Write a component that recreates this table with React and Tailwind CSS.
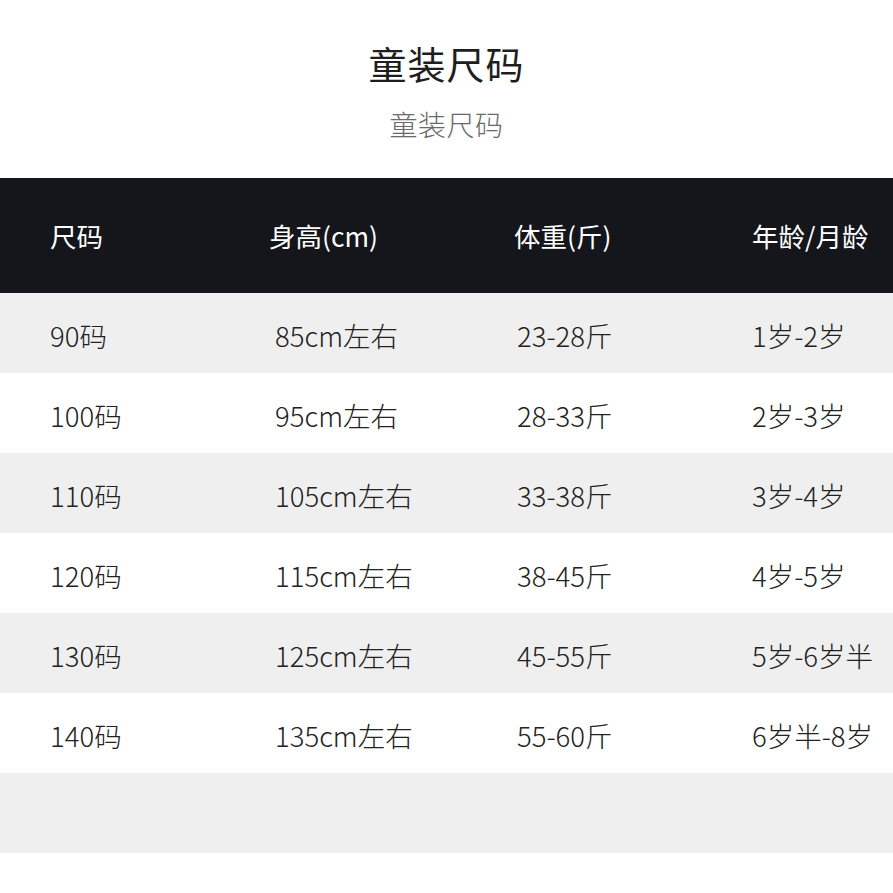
const rows = [
  ['90码', '85cm左右', '23-28斤', '1岁-2岁'],
  ['100码', '95cm左右', '28-33斤', '2岁-3岁'],
  ['110码', '105cm左右', '33-38斤', '3岁-4岁'],
  ['120码', '115cm左右', '38-45斤', '4岁-5岁'],
  ['130码', '125cm左右', '45-55斤', '5岁-6岁半'],
  ['140码', '135cm左右', '55-60斤', '6岁半-8岁'],
];

export default function App() {
  return (
    <div className="w-[893px] h-[893px] overflow-hidden bg-white font-['Noto_Sans_CJK_SC',sans-serif]">
      <div className="h-[178px] flex flex-col items-center">
        <h1 className="mt-[42px] text-[38px] leading-[42px] text-[#1e1e1e] tracking-[1px]">童装尺码</h1>
        <p className="mt-[25px] text-[28px] leading-[30px] text-[#6a6a6a] font-light tracking-[0.5px]">童装尺码</p>
      </div>

      <div className="h-[115px] bg-[#15151c] grid grid-cols-[219px_245px_238px_1fr] items-center pl-[50px] text-white text-[26.5px] pt-[1px]">
        <div>尺码</div>
        <div>身高(cm)</div>
        <div>体重(斤)</div>
        <div>年龄/月龄</div>
      </div>

      {rows.map((r, i) => (
        <div
          key={i}
          className={`h-[80px] grid grid-cols-[225px_242px_235px_1fr] items-center pl-[50px] pt-[6px] text-[27.5px] font-light text-[#222] ${i % 2 === 0 ? 'bg-[#efefef]' : 'bg-white'}`}
        >
          {r.map((c, j) => (
            <div key={j}>{c}</div>
          ))}
        </div>
      ))}

      <div className="h-[80px] bg-[#efefef]" />
      <div className="h-[40px] bg-white" />
    </div>
  );
}
